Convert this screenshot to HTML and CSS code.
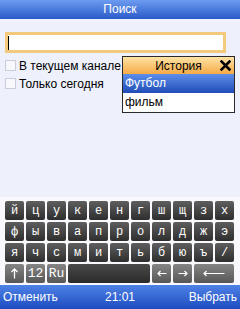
FILE: index.html
```html
<!DOCTYPE html>
<html>
<head>
<meta charset="utf-8">
<link rel="stylesheet" href="styles.css">
</head>
<body>
<div class="screen">
  <div class="header">Поиск</div>
  <div class="content">
    <div class="input"><span class="cursor"></span></div>
    <div class="options">
      <div class="option"><span class="check"></span><span>В текущем канале</span></div>
      <div class="option"><span class="check"></span><span>Только сегодня</span></div>
    </div>
    <div class="popup">
      <div class="popup-title"><span>История</span>
        <svg class="close" width="11" height="11" viewBox="0 0 11 11"><path d="M1.5 1.5L9.5 9.5M9.5 1.5L1.5 9.5" stroke="#000" stroke-width="2.6" stroke-linecap="square"/></svg>
      </div>
      <div class="popup-row selected">Футбол</div>
      <div class="popup-row">фильм</div>
    </div>
  </div>
  <div class="keyboard">
    <div class="key">й</div><div class="key">ц</div><div class="key">у</div><div class="key">к</div><div class="key">е</div><div class="key">н</div><div class="key">г</div><div class="key">ш</div><div class="key">щ</div><div class="key">з</div><div class="key">х</div>
    <div class="key">ф</div><div class="key">ы</div><div class="key">в</div><div class="key">а</div><div class="key">п</div><div class="key">р</div><div class="key">о</div><div class="key">л</div><div class="key">д</div><div class="key">ж</div><div class="key">э</div>
    <div class="key">я</div><div class="key">ч</div><div class="key">с</div><div class="key">м</div><div class="key">и</div><div class="key">т</div><div class="key">ь</div><div class="key">б</div><div class="key">ю</div><div class="key">ъ</div><div class="key">/</div>
    <div class="key light"><svg width="9" height="11" viewBox="0 0 9 11"><path d="M4.5 1V10.5M1.5 4L4.5 1L7.5 4" stroke="#fff" stroke-width="1.3" fill="none"/></svg></div>
    <div class="key light">12</div>
    <div class="key light">Ru</div>
    <div class="key space"></div>
    <div class="key light"><svg width="10" height="7" viewBox="0 0 10 7"><path d="M9.5 3.5H1M3.5 1L1 3.5L3.5 6" stroke="#fff" stroke-width="1.2" fill="none"/></svg></div>
    <div class="key light"><svg width="10" height="7" viewBox="0 0 10 7"><path d="M0.5 3.5H9M6.5 1L9 3.5L6.5 6" stroke="#fff" stroke-width="1.2" fill="none"/></svg></div>
    <div class="key light wide"><svg width="22" height="7" viewBox="0 0 22 7"><path d="M21.5 3.5H1M3.5 1L1 3.5L3.5 6" stroke="#fff" stroke-width="1.2" fill="none"/></svg></div>
  </div>
  <div class="footer">
    <span class="left">Отменить</span>
    <span class="mid">21:01</span>
    <span class="right">Выбрать</span>
  </div>
</div>
</body>
</html>
```

FILE: styles.css
```css
html, body {
  margin: 0;
  padding: 0;
}
body {
  width: 240px;
  height: 309px;
  overflow: hidden;
  background: #eef0fb;
  font-family: "Liberation Sans", Arial, sans-serif;
  font-size: 12px;
}
.screen {
  display: flex;
  flex-direction: column;
  height: 309px;
}
.header {
  height: 19px;
  line-height: 19px;
  text-align: center;
  color: #fff;
  background: linear-gradient(#6c9cf0, #2a5ac8);
}
.content {
  flex: 1;
  position: relative;
  padding: 13px 0 0 5px;
}
.input {
  box-sizing: border-box;
  width: 221px;
  height: 21px;
  border: 3px solid #f3c97e;
  background: #fff;
  padding: 1px 0 0 0;
}
.cursor {
  display: block;
  width: 1px;
  height: 14px;
  background: #000;
}
.options {
  margin-top: 7px;
  display: flex;
  flex-direction: column;
  color: #000;
}
.option {
  display: flex;
  align-items: center;
  gap: 3px;
  height: 18px;
  margin-top: -3.5px;
  margin-bottom: 3.5px;
}
.check {
  box-sizing: border-box;
  width: 11px;
  height: 11px;
  border: 1px solid #c9ccd9;
  background: #f7f7fc;
}
.popup {
  position: absolute;
  left: 122px;
  top: 37px;
  width: 113px;
  box-sizing: border-box;
  border: 1px solid #2a2a2a;
  background: #fff;
}
.popup-title {
  height: 17px;
  background: linear-gradient(#fde3a6, #f6aa45);
  display: flex;
  align-items: center;
  justify-content: center;
  position: relative;
  color: #000;
}
.close {
  position: absolute;
  right: 3px;
  top: 3px;
}
.popup-row {
  height: 19px;
  line-height: 19px;
  padding-left: 2px;
  color: #000;
  background: #fff;
}
.popup-row.selected {
  color: #fff;
  background: linear-gradient(#5d8eea, #1f4cb7);
}
.keyboard {
  display: grid;
  grid-template-columns: repeat(11, 19px);
  grid-auto-rows: 19px;
  gap: 2px;
  padding: 4px 5px 2px 5px;
  background: #f8f8fd;
}
.key {
  display: flex;
  align-items: center;
  justify-content: center;
  border-radius: 2px;
  background: linear-gradient(#5e5e5e, #2e2e2e);
  color: #fff;
  font-family: "Liberation Mono", "Courier New", monospace;
  font-size: 12px;
}
.key.light {
  background: linear-gradient(#858585, #575757);
  font-size: 13px;
}
.key.space {
  grid-column: span 4;
  background: linear-gradient(#4a4a4a, #2a2a2a);
}
.key.wide {
  grid-column: span 2;
}
.footer {
  height: 24px;
  display: grid;
  grid-template-columns: 1fr auto 1fr;
  align-items: center;
  padding: 0 3px;
  color: #fff;
  background: linear-gradient(#4f82e6, #1d4cc0);
}
.footer .left { justify-self: start; }
.footer .mid { justify-self: center; }
.footer .right { justify-self: end; }
```
